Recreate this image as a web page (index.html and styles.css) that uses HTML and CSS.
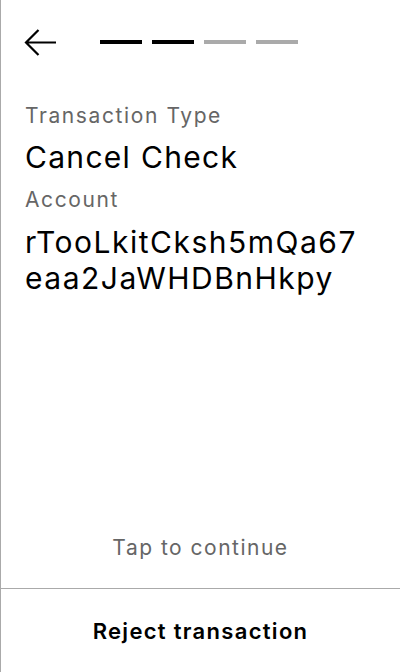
FILE: index.html
```html
<!DOCTYPE html>
<html>
<head>
<meta charset="utf-8">
<link rel="stylesheet" href="styles.css">
</head>
<body>
<div class="screen">
  <div class="header">
    <svg class="back" width="34" height="30" viewBox="0 0 34 30">
      <path d="M32 14.5 H2 M14.5 2 L2 14.5 L14.5 27" fill="none" stroke="#000" stroke-width="2.2"/>
    </svg>
    <div class="steps">
      <span class="step done"></span>
      <span class="step done"></span>
      <span class="step"></span>
      <span class="step"></span>
    </div>
  </div>
  <div class="content">
    <div class="label">Transaction Type</div>
    <div class="value type">Cancel Check</div>
    <div class="label">Account</div>
    <div class="value addr">rTooLkitCksh5mQa67 eaa2JaWHDBnHkpy</div>
  </div>
  <div class="tap">Tap to continue</div>
  <div class="reject">Reject transaction</div>
</div>
</body>
</html>
```
FILE: styles.css
```css
* { box-sizing: border-box; }
html, body { margin: 0; padding: 0; background: #fff; }
body { font-family: Inter, "Noto Sans", sans-serif; color: #000; }
.screen {
  width: 400px;
  height: 672px;
  border-left: 1px solid #aaa;
  display: flex;
  flex-direction: column;
}
.header {
  display: flex;
  align-items: center;
  padding: 28px 0 0 23px;
  height: 58px;
}
.back { display: block; }
.steps {
  display: flex;
  gap: 10px;
  margin-left: 42px;
  margin-top: -2px;
}
.step {
  width: 42px;
  height: 4px;
  background: #aaa;
}
.step.done { background: #000; }
.content {
  padding: 44px 24px 0 24px;
  flex: 1;
}
.label {
  font-size: 21px;
  line-height: 28px;
  letter-spacing: 1.6px;
  color: #666;
}
.value {
  font-size: 30px;
  line-height: 36px;
  letter-spacing: 1.3px;
}
.type {
  margin-top: 9px;
  margin-bottom: 11px;
}
.addr {
  margin-top: 10px;
  width: 360px;
  letter-spacing: 1.5px;
}
.tap {
  text-align: center;
  font-size: 21px;
  letter-spacing: 1.5px;
  color: #666;
  padding-bottom: 28px;
}
.reject {
  border-top: 1px solid #aaa;
  height: 84px;
  display: flex;
  align-items: center;
  justify-content: center;
  font-size: 22px;
  letter-spacing: 1.3px;
  font-weight: 600;
}
```
